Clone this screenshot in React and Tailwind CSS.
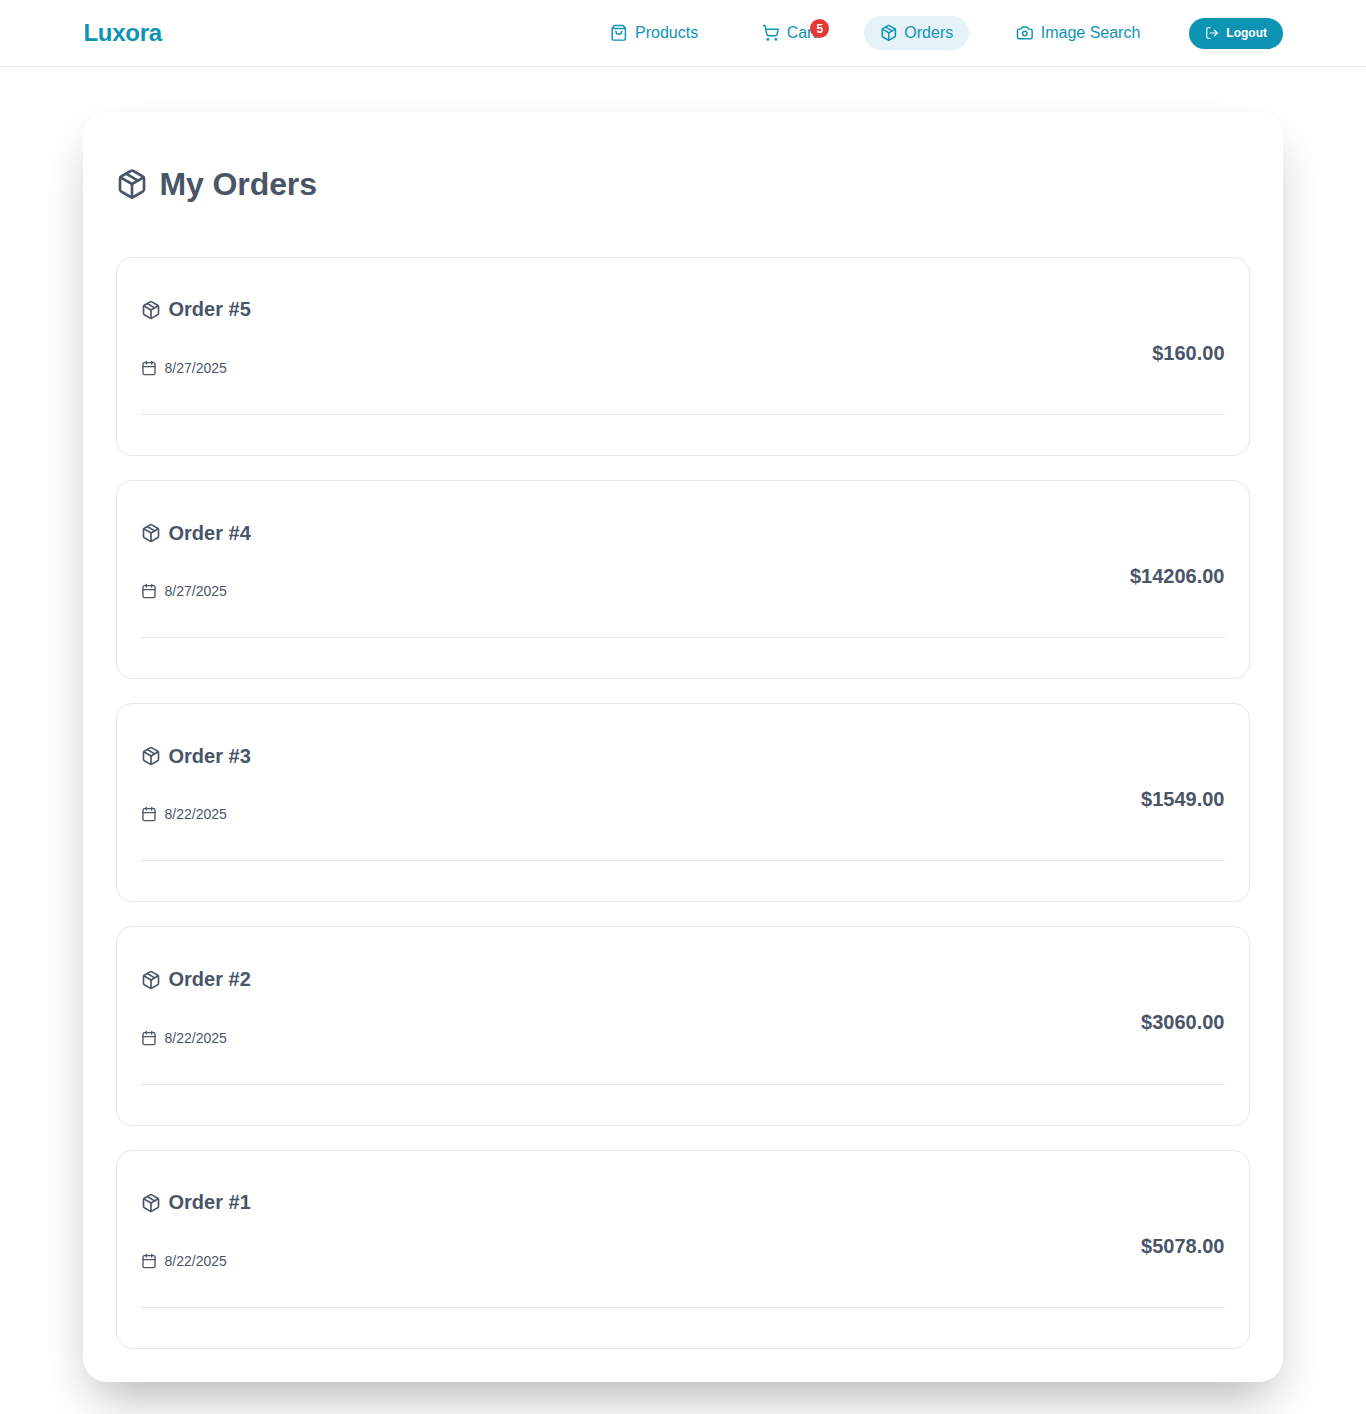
import React from "react";
import { Calendar, Camera, LogOut, Package, ShoppingBag, ShoppingCart } from "lucide-react";

const orders = [
  { id: 5, date: "8/27/2025", total: "$160.00" },
  { id: 4, date: "8/27/2025", total: "$14206.00" },
  { id: 3, date: "8/22/2025", total: "$1549.00" },
  { id: 2, date: "8/22/2025", total: "$3060.00" },
  { id: 1, date: "8/22/2025", total: "$5078.00" },
];

const NavLink = ({ icon: Icon, label, active, className = "" }) => (
  <a
    href="#"
    className={`relative flex items-center gap-[7px] rounded-full py-[7px] pl-[15.4px] pr-4 text-base leading-[20px] text-[#0d94b5] ${
      active ? "bg-[#e5f3f8]" : ""
    } ${className}`}
  >
    <Icon size={17.6} />
    {label}
  </a>
);

const OrderCard = ({ order }) => (
  <div className="h-[199.2px] rounded-2xl border border-[#e5e7eb] bg-white px-6 pt-[34px]">
    <div className="flex items-center justify-between border-b border-[#e5e7eb] pb-0">
      <div className="pb-[36px]">
        <h2 className="flex items-center gap-[7.5px] pt-[3.7px] pb-[3px] text-xl font-bold leading-[28px] text-[#4a5568]">
          <Package size={20} className="mt-[1px]" />
          Order #{order.id}
        </h2>
        <p className="mt-[31.5px] flex items-center gap-[7.5px] text-sm leading-[20px] text-[#4a5568]">
          <Calendar size={16} />
          {order.date}
        </p>
      </div>
      <span className="mb-[0.1px] mr-[0.5px] text-xl font-bold text-[#4a5568]">{order.total}</span>
    </div>
  </div>
);

export default function App() {
  return (
    <div className="min-h-screen bg-white font-['Liberation_Sans',Arial,sans-serif]">
      <nav className="flex h-[67px] items-center justify-between border-b border-[#e5e7eb] bg-white pl-[83.5px] pr-[83px]">
        <span className="text-2xl font-bold tracking-[-0.3px] text-[#0d94b5]">Luxora</span>
        <div className="flex items-center">
          <NavLink icon={ShoppingBag} label="Products" className="mr-[32.5px]" />
          <div className="relative mr-[31.5px]">
            <NavLink icon={ShoppingCart} label="Cart" />
            <span className="absolute right-[3.5px] top-[3px] flex h-[19px] w-[19px] items-center justify-center rounded-full bg-[#e53935] text-xs font-bold text-white">
              5
            </span>
          </div>
          <NavLink icon={Package} label="Orders" active className="mr-[31.5px]" />
          <NavLink icon={Camera} label="Image Search" className="mr-[32.5px]" />
          <button className="flex h-[31px] items-center gap-[7.5px] rounded-full bg-[#0d94b5] px-4 text-xs font-bold text-white">
            <LogOut size={14} />
            Logout
          </button>
        </div>
      </nav>

      <main className="mx-auto w-[1200px] pb-8 pt-[45px]">
        <div className="rounded-3xl bg-white p-[33px] shadow-[0_25px_50px_-12px_rgba(0,0,0,0.3)]">
          <h1 className="mb-[48.8px] mt-[15px] flex items-center gap-[11.5px] text-[32px] font-bold leading-[48px] tracking-[-0.1px] text-[#4a5568]">
            <Package size={32} />
            My Orders
          </h1>
          <div className="flex flex-col gap-6">
            {orders.map((order) => (
              <OrderCard key={order.id} order={order} />
            ))}
          </div>
        </div>
      </main>
    </div>
  );
}
